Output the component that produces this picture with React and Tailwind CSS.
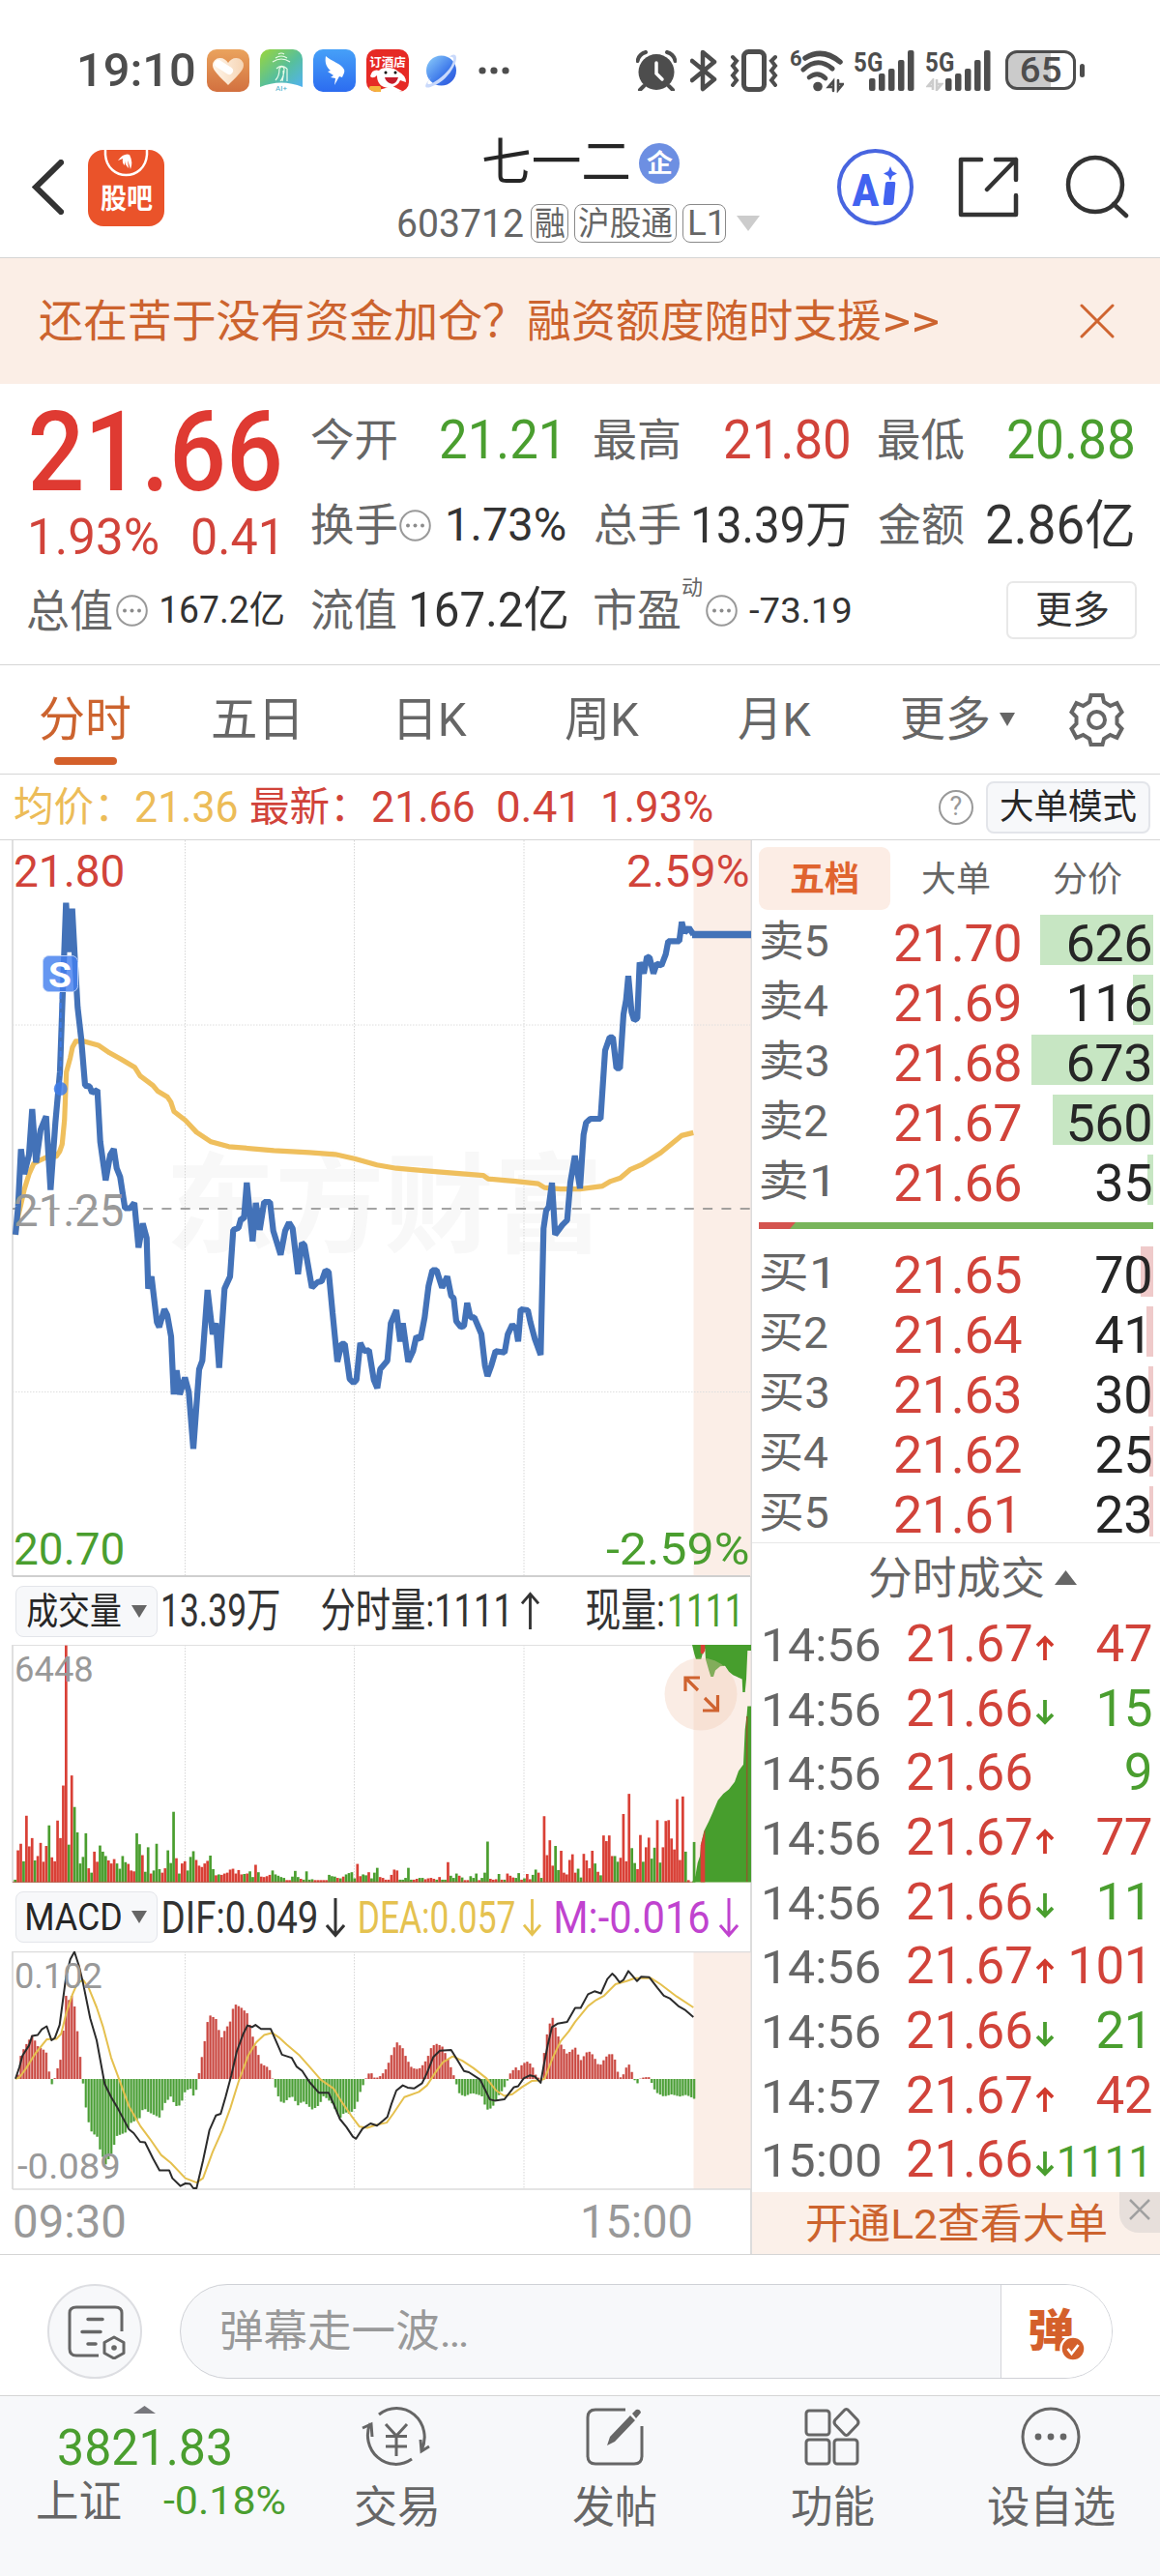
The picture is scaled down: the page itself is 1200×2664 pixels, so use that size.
import { useLayoutEffect, useRef } from "react";

/* Text whose inked extent fills the width given by its class. */
function Fit({ children, className = "" }) {
  const outer = useRef(null);
  const inner = useRef(null);
  useLayoutEffect(() => {
    const el = inner.current;
    const cs = getComputedStyle(el);
    const ctx = document.createElement("canvas").getContext("2d");
    ctx.font = `${cs.fontWeight} ${cs.fontSize} ${cs.fontFamily}`;
    const m = ctx.measureText(el.textContent);
    const ink = m.actualBoundingBoxRight + m.actualBoundingBoxLeft;
    const k = outer.current.clientWidth / ink;
    el.style.transform = `translateX(${m.actualBoundingBoxLeft * k}px) scaleX(${k})`;
  }, [children]);
  return (
    <span ref={outer} className={`block shrink-0 leading-none ${className}`}>
      <span ref={inner} className="inline-block origin-left whitespace-nowrap leading-none">{children}</span>
    </span>
  );
}

const RED = "#d94036";
const GREEN = "#4a9e2f";

/* ---------- status bar ---------- */
function SignalBars({ className }) {
  return (
    <svg className={className} viewBox="0 0 47 42" fill="#4d4d4d">
      <rect x="0" y="29" width="6.5" height="13" rx="2" />
      <rect x="10" y="24" width="6.5" height="18" rx="2" />
      <rect x="20" y="19" width="6.5" height="23" rx="2" />
      <rect x="30" y="10" width="6.5" height="32" rx="2" />
      <rect x="40" y="0" width="6.5" height="42" rx="2" />
    </svg>
  );
}

function StatusBar() {
  return (
    <div className="flex h-[130px] items-center pl-[83px] pt-[15px] text-[#4d4d4d]">
      <Fit className="w-[118px] text-[49px] font-medium">19:10</Fit>
      <svg className="ml-[13px] h-[44px] w-[44px]" viewBox="0 0 44 44">
        <defs>
          <linearGradient id="heartBg" x1="0" y1="0" x2="0" y2="1"><stop offset="0" stopColor="#eaa35d" /><stop offset="1" stopColor="#d2703f" /></linearGradient>
          <linearGradient id="heartFg" x1="0" y1="0" x2="1" y2="0"><stop offset="0" stopColor="#fff6ea" /><stop offset="1" stopColor="#f6d5b5" /></linearGradient>
        </defs>
        <rect width="44" height="44" rx="10" fill="url(#heartBg)" />
        <path d="M22 37C14 29 6 22 6 16.500a7.500 7.500 0 0 1 7.500-7.500c4 0 6.500 2 8.500 5 2-3 4.500-5 8.500-5a7.500 7.500 0 0 1 7.500 7.500C38 22 30 29 22 37Z" fill="url(#heartFg)" />
        <path d="M12 15l11 7" stroke="#fff" strokeWidth="8" strokeLinecap="round" />
      </svg>
      <svg className="ml-[11px] h-[44px] w-[44px]" viewBox="0 0 44 44">
        <defs><linearGradient id="aiBg" x1="0" y1="0" x2="1" y2="1"><stop offset="0" stopColor="#9bd63a" /><stop offset=".55" stopColor="#57bf9c" /><stop offset="1" stopColor="#51b2f2" /></linearGradient></defs>
        <path d="M10 0h24a10 10 0 0 1 10 10v29Q22 30 0 39V10A10 10 0 0 1 10 0Z" fill="url(#aiBg)" />
        <g fill="none" stroke="#e8fbe8" strokeWidth="1.200">
          <path d="M19 5q3-2 6 0M16 9q6-4 12 0M13 13q9-6 18 0M16 32q4-4 4-12q3-4 5 0q0 8-4 13M24 22q1 5-1 11M28 20v13M17 20q5-5 11 0" />
        </g>
        <text x="22" y="43" textAnchor="middle" fontSize="8" fontFamily="Roboto" fill="#46aecb">AI+</text>
      </svg>
      <svg className="ml-[11px] h-[44px] w-[44px]" viewBox="0 0 44 44">
        <defs><linearGradient id="wingBg" x1="0" y1="0" x2="0" y2="1"><stop offset="0" stopColor="#46a0f8" /><stop offset="1" stopColor="#2c6cf0" /></linearGradient></defs>
        <rect width="44" height="44" rx="10" fill="url(#wingBg)" />
        <path d="M13 7c5 5 17 8 19 14 1 3-1 5-2 8l-3-1-5 9 1-7-5-1 3-2-6-4 3-1c-5-4-6-9-5-15Z" fill="#fff" />
      </svg>
      <svg className="ml-[11px] h-[44px] w-[44px]" viewBox="0 0 44 44">
        <defs><clipPath id="dogClip"><rect width="44" height="44" rx="10" /></clipPath></defs>
        <g clipPath="url(#dogClip)">
          <rect width="44" height="44" fill="#e62a25" />
          <text x="22" y="18" textAnchor="middle" fontSize="12.500" fontWeight="700" fontFamily="'Noto Sans CJK SC'" fill="#fff">订酒店</text>
          <path d="M4 28q2-8 9-6 2-3 9-3t11 4q8 4 8 11l-6-2q-2 6-12 8Q11 39 11 27q-4 4-7 1Z" fill="#fff" />
          <circle cx="20" cy="24" r="1.500" /><circle cx="30" cy="24" r="1.500" />
          <path d="M19 29h14q-3 9-9 6-4-2-5-6Z" fill="#c41c2b" />
          <path d="M13 42l14-4 10 5v3H13Z" fill="#fff" />
          <rect x="3" y="38" width="12" height="7" rx="1.500" fill="#f4b23c" />
        </g>
      </svg>
      <svg className="ml-[15px] h-[38px] w-[37px]" viewBox="0 0 37 38">
        <defs><linearGradient id="globe" x1="0" y1="0" x2="1" y2="1"><stop offset="0" stopColor="#8fd0fb" /><stop offset=".6" stopColor="#3c77ea" /><stop offset="1" stopColor="#2f55da" /></linearGradient></defs>
        <circle cx="18.500" cy="19" r="15.500" fill="url(#globe)" />
        <path d="M8 26C-2 37 2 39 12 34C24 29 34 14 34 6C34 0 28 3 27 5C33 3 32 10 27 17C21 25 8 34 5 33C3 32 6 29 8 26Z" fill="#c9d9fb" />
      </svg>
      <svg className="ml-[20px] h-[8px] w-[32px]" viewBox="0 0 32 8" fill="#4d4d4d"><circle cx="4" cy="4" r="3.600" /><circle cx="16" cy="4" r="3.600" /><circle cx="28" cy="4" r="3.600" /></svg>

      <svg className="ml-[131px] h-[42px] w-[42px]" viewBox="0 0 42 42">
        <circle cx="21" cy="22.500" r="18.500" fill="#4d4d4d" />
        <path d="M1.500 11Q3 4 10 2M40.500 11Q39 4 32 2M8 37l-4 4M34 37l4 4" stroke="#4d4d4d" strokeWidth="4" strokeLinecap="round" fill="none" />
        <path d="M21 13v11l6 6" stroke="#fff" strokeWidth="3.500" strokeLinecap="round" fill="none" />
      </svg>
      <svg className="ml-[14px] h-[44px] w-[28px]" viewBox="0 0 28 44" fill="none" stroke="#4d4d4d" strokeWidth="4.500" strokeLinecap="round" strokeLinejoin="round"><path d="M2 12l23 19-12 10V3l12 10L2 32" /></svg>
      <svg className="ml-[13px] h-[44px] w-[50px]" viewBox="0 0 50 44" fill="none" stroke="#4d4d4d" strokeLinecap="round">
        <rect x="14.500" y="2.500" width="21" height="39" rx="5" strokeWidth="5" />
        <path d="M3 8l4 4-4 5 4 5-4 5 4 5-4 5M47 8l-4 4 4 5-4 5 4 5-4 5 4 5" strokeWidth="4" />
      </svg>
      <div className="ml-[12px] flex h-[46px] w-[56px] items-start">
        <span className="w-[11px] text-[22px] font-bold leading-none">6</span>
        <svg className="mt-[2px] h-[44px] w-[45px]" viewBox="0 0 45 44" fill="none" stroke="#4d4d4d" strokeLinecap="round">
          <path d="M5 8Q23-3 41 12" strokeWidth="5.500" /><path d="M3 20Q18 6 33 19" strokeWidth="5" /><path d="M9 28q9-7 17 1" strokeWidth="4.600" />
          <circle cx="18" cy="37.500" r="4.800" fill="#4d4d4d" stroke="none" />
          <path d="M34 42V32l-5 6h5M39 31v10l5-6h-5" strokeWidth="2.600" />
        </svg>
      </div>
      <div className="relative ml-[11px] h-[42px] w-[62px]">
        <SignalBars className="absolute bottom-0 right-0 h-[42px] w-[47px]" />
        <Fit className="absolute left-0 top-0 w-[28px] text-[27px] font-bold">5G</Fit>
      </div>
      <div className="relative ml-[12px] h-[42px] w-[67px]">
        <SignalBars className="absolute bottom-0 right-0 h-[42px] w-[47px]" />
        <Fit className="absolute left-0 top-0 w-[28px] text-[27px] font-bold">5G</Fit>
        <svg className="absolute bottom-0 left-0 h-[13px] w-[18px]" viewBox="0 0 18 13" stroke="#ccc" strokeWidth="2.600" fill="none"><path d="M7 12V2L2 8h5M11 1v11l5-6h-5" /></svg>
      </div>
      <div className="ml-[15px] flex items-center">
        <div className="flex h-[41px] w-[73px] items-center justify-center rounded-[12px] border-[3px] border-[#4d4d4d] bg-gradient-to-r from-[#cbcbcb] from-65% to-white to-65%">
          <Fit className="w-[40px] text-[36px] font-medium">65</Fit>
        </div>
        <div className="ml-[4px] h-[14px] w-[5px] rounded-[3px] bg-[#4d4d4d]" />
      </div>
    </div>
  );
}

/* ---------- header ---------- */
function Header() {
  return (
    <div className="flex h-[137px] items-start border-b border-[#d5d5d5] pl-[33px]">
      <svg className="mt-[35px] h-[57px] w-[33px]" viewBox="0 0 33 57" fill="none" stroke="#333" strokeWidth="6"><path d="M30 3L4 28.500 30 54" strokeLinecap="square" /></svg>
      <div className="relative ml-[25px] mt-[25px] h-[79px] w-[79px] overflow-hidden rounded-[16px] bg-[#ea532a]">
        <svg className="absolute left-0 top-0 h-[79px] w-[79px]" viewBox="0 0 79 79" fill="none">
          <path d="M18 0v5c2 28 41 28 43 0V0" stroke="#fff" strokeWidth="2.500" />
          <path d="M31 11q6-8 12-6 4 8 1 15-2-7-3-9l1 8q-4-4-4-8l0 5q-3-2-2-7Z" fill="#fff" />
        </svg>
        <Fit className="absolute left-[13px] top-[37px] w-[54px] text-[29px] font-bold text-white">股吧</Fit>
      </div>
      <div className="ml-[242px] w-[374px]">
        <div className="flex h-[76px] items-center pl-[88px] pt-[2px]">
          <Fit className="w-[151px] text-[52px] text-[#262626]">七一二</Fit>
          <div className="ml-[10px] flex h-[42px] w-[42px] items-center justify-center rounded-full bg-[#6d8fe2]">
            <Fit className="w-[27px] text-[26px] font-bold text-white">企</Fit>
          </div>
        </div>
        <div className="flex h-[50px] items-center text-[#666]">
          <Fit className="w-[129px] text-[41px]">603712</Fit>
          <div className="ml-[8px] flex h-[40px] w-[39px] items-center justify-center rounded-[8px] border border-[#8a8a8a]"><Fit className="w-[30px] text-[34px]">融</Fit></div>
          <div className="ml-[6px] flex h-[40px] w-[106px] items-center justify-center rounded-[8px] border border-[#8a8a8a]"><Fit className="w-[96px] text-[34px]">沪股通</Fit></div>
          <div className="ml-[6px] flex h-[40px] w-[45px] items-center justify-center rounded-[8px] border border-[#8a8a8a]"><Fit className="w-[31px] text-[36px]">L1</Fit></div>
          <svg className="ml-[11px] h-[16px] w-[24px]" viewBox="0 0 24 16"><path d="M0 0h24L12 16Z" fill="#ccc" /></svg>
        </div>
      </div>
      <div className="relative ml-[80px] mt-[24px] h-[79px] w-[79px] rounded-full border-4 border-[#4865e0]">
        <Fit className="absolute left-[11px] top-[15px] w-[29px] text-[47px] font-black text-[#4263f0]">A</Fit>
        <svg className="absolute left-[42px] top-[13px] h-[42px] w-[16px]" viewBox="0 0 16 42" fill="#4263f0"><path d="M9 1l2 5 5 2.500-5 2.500-2 5-2-5-5-2.500 5-2.500ZM4 18.500q.200-1.500 2-1.500h7q1.500 0 1.300 1.500L12.500 39q-.300 2-2 2H3q-1.500 0-1.300-2Z" /></svg>
      </div>
      <svg className="ml-[46px] mt-[32px] h-[64px] w-[64px]" viewBox="0 0 64 64" fill="none" stroke="#333" strokeWidth="4.500" strokeLinecap="round" strokeLinejoin="round">
        <path d="M24 3H3v57h57V40M39 3h21v21M60 3L30 34" />
      </svg>
      <svg className="ml-[47px] mt-[30px] h-[66px] w-[66px]" viewBox="0 0 66 66" fill="none" stroke="#333" strokeWidth="4.500" strokeLinecap="round"><circle cx="31" cy="31" r="28" /><path d="M50 51l13 12" /></svg>
    </div>
  );
}

function Banner() {
  return (
    <div className="flex h-[130px] items-center bg-[#fbeee6] pl-[41px] text-[46px] text-[#cc632e]">
      <Fit className="w-[480px]">还在苦于没有资金加仓？</Fit>
      <Fit className="ml-[26px] w-[364px]">融资额度随时支援</Fit>
      <Fit className="ml-[5px] w-[55px]">&gt;&gt;</Fit>
      <svg className="ml-[146px] h-[36px] w-[36px]" viewBox="0 0 36 36" stroke="#cf6430" strokeWidth="3" strokeLinecap="round"><path d="M2 2l32 32M34 2L2 34" /></svg>
    </div>
  );
}

/* ---------- quote ---------- */
function Dots() {
  return (
    <svg className="h-[33px] w-[33px] shrink-0" viewBox="0 0 33 33" fill="#8c8c8c">
      <circle cx="16.500" cy="16.500" r="15.300" fill="none" stroke="#999" strokeWidth="2" />
      <circle cx="9" cy="16.500" r="2" /><circle cx="16.500" cy="16.500" r="2" /><circle cx="24" cy="16.500" r="2" />
    </svg>
  );
}
const Label = ({ children }) => <Fit className="w-[88px] text-[46px] text-[#666]">{children}</Fit>;

function Quote() {
  return (
    <div className="flex h-[291px] border-b border-[#d5d5d5] pt-[14px] text-[#333]">
      <div className="w-[322px]">
        <div className="flex h-[112px] items-center pl-[32px]"><Fit className="w-[257px] text-[115px] font-medium text-[#df3a32]">21.66</Fit></div>
        <div className="flex h-[65px] items-center pl-[32px] text-[#d1433a]">
          <Fit className="w-[131px] text-[52px]">1.93%</Fit>
          <Fit className="ml-[36px] w-[86px] text-[52px]">0.41</Fit>
        </div>
        <div className="flex h-[87px] items-center pl-[28px]">
          <Label>总值</Label><span className="ml-[4px]"><Dots /></span>
          <Fit className="ml-[14px] w-[126px] text-[39px]">167.2亿</Fit>
        </div>
      </div>
      <div className="w-[264px]">
        <div className="flex h-[88px] items-center justify-between pr-[10px]"><Label>今开</Label><Fit className="w-[120px] text-[55px] text-[#4a9e2f]">21.21</Fit></div>
        <div className="flex h-[88px] items-center"><Label>换手</Label><span className="ml-[3px]"><Dots /></span><Fit className="ml-[18px] w-[121px] text-[48px]">1.73%</Fit></div>
        <div className="flex h-[88px] items-center justify-between"><Label>流值</Label><Fit className="w-[160px] text-[50px]">167.2亿</Fit></div>
      </div>
      <div className="ml-[29px] w-[266px]">
        <div className="flex h-[88px] items-center justify-between pr-[3px]"><Label>最高</Label><Fit className="w-[128px] text-[55px] text-[#d1433a]">21.80</Fit></div>
        <div className="flex h-[88px] items-center justify-between pr-[3px]"><Label>总手</Label><Fit className="w-[160px] text-[51px]">13.39万</Fit></div>
        <div className="flex h-[88px] items-center">
          <Label>市盈</Label>
          <Fit className="mb-[46px] ml-[3px] w-[20px] text-[22px] text-[#666]">动</Fit>
          <span className="ml-[4px]"><Dots /></span>
          <Fit className="ml-[12px] w-[105px] text-[37px]">-73.19</Fit>
        </div>
      </div>
      <div className="ml-[28px] w-[267px]">
        <div className="flex h-[88px] items-center justify-between pr-[4px]"><Label>最低</Label><Fit className="w-[129px] text-[55px] text-[#4a9e2f]">20.88</Fit></div>
        <div className="flex h-[88px] items-center justify-between pr-[4px]"><Label>金额</Label><Fit className="w-[151px] text-[55px]">2.86亿</Fit></div>
        <div className="flex h-[88px] items-center justify-end">
          <div className="flex h-[60px] w-[135px] items-center justify-center rounded-[7px] border-2 border-[#e8e8e8]"><Fit className="w-[74px] text-[39px]">更多</Fit></div>
        </div>
      </div>
    </div>
  );
}

function Tabs() {
  return (
    <div className="flex h-[113px] items-center border-b border-[#d5d5d5] pl-[42px] text-[49px] text-[#666]">
      <div className="relative">
        <Fit className="w-[93px] text-[#cc632e]">分时</Fit>
        <div className="absolute left-[14px] top-[63px] h-[8px] w-[65px] rounded-full bg-[#d4602b]" />
      </div>
      <Fit className="ml-[85px] w-[87px]">五日</Fit>
      <Fit className="ml-[106px] w-[70px]">日K</Fit>
      <Fit className="ml-[102px] w-[76px]">周K</Fit>
      <Fit className="ml-[103px] w-[75px]">月K</Fit>
      <Fit className="ml-[94px] w-[90px]">更多</Fit>
      <svg className="ml-[11px] h-[14px] w-[16px]" viewBox="0 0 16 14"><path d="M0 0h16L8 14Z" fill="#666" /></svg>
      <svg className="ml-[56px] h-[57px] w-[57px]" viewBox="0 0 57 57" fill="none" stroke="#666" strokeWidth="4">
        <path d="M22.500 3h12l1.500 7 6.500 4 7-3 5 9.500-5 5v7l5 5-5 9.500-7-3-6.500 4-1.500 6h-12l-1.500-6-6.500-4-7 3-5-9.500 5-5v-7l-5-5 5-9.500 7 3 6.500-4Z" />
        <circle cx="28.500" cy="28.500" r="8.500" />
      </svg>
    </div>
  );
}

function InfoRow() {
  return (
    <div className="flex h-[68px] items-center border-b border-[#d5d5d5] pl-[15px] text-[44px] text-[#d1433a]">
      <Fit className="w-[96px] text-[42px] text-[#ecbc58]">均价：</Fit>
      <Fit className="ml-[30px] w-[104px] text-[#ecbc58]">21.36</Fit>
      <Fit className="ml-[14px] w-[96px] text-[42px]">最新：</Fit>
      <Fit className="ml-[31px] w-[104px]">21.66</Fit>
      <Fit className="ml-[25px] w-[78px]">0.41</Fit>
      <Fit className="ml-[31px] w-[113px]">1.93%</Fit>
      <div className="ml-[234px] flex h-[36px] w-[36px] items-center justify-center rounded-full border-2 border-[#999] text-[27px] leading-none text-[#999]">?</div>
      <div className="ml-[13px] flex h-[54px] w-[170px] items-center justify-center rounded-[8px] border-2 border-[#e3e5ea] bg-[#f7f8fa]"><Fit className="w-[140px] text-[36px] text-[#262626]">大单模式</Fit></div>
    </div>
  );
}

/* ---------- chart data: x in thirds of a pixel ---------- */
const PRICE = "48,838 56,780 65,660 75,712 90,672 100,577 112,688 126,620 143,592 157,745 172,605 186,500 195,330 205,148 214,250 224,160 232,258 241,365 252,430 264,528 278,530 286,543 302,537 311,645 328,725 342,672 353,660 362,700 373,718 388,783 404,783 417,772 430,865 443,815 455,845 460,950 470,925 487,1020 494,1030 510,993 519,1005 531,1050 539,1170 548,1120 558,1170 574,1135 586,1165 600,1283 618,1118 628,1100 644,953 660,1045 670,1022 680,1115 697,950 714,925 724,828 740,824 748,805 757,805 766,730 784,852 794,772 806,828 820,770 838,770 848,830 871,880 885,830 897,813 908,825 925,920 937,855 945,860 968,948 985,937 998,935 1010,912 1020,915 1032,1000 1047,1102 1060,1065 1070,1065 1085,1138 1097,1146 1106,1140 1118,1063 1130,1080 1145,1078 1160,1140 1171,1157 1180,1118 1202,1100 1213,1022 1230,995 1242,1060 1250,1022 1267,1102 1282,1080 1292,1050 1305,1055 1318,1010 1330,945 1342,912 1355,912 1372,948 1388,925 1400,965 1408,970 1416,1018 1430,1030 1440,1028 1450,980 1460,1010 1472,1010 1494,1045 1505,1110 1513,1132 1525,1110 1538,1080 1566,1083 1576,1045 1590,1025 1602,1035 1608,1060 1616,993 1638,995 1646,1020 1660,1055 1678,1088 1687,825 1695,788 1703,780 1713,730 1723,838 1745,818 1760,808 1770,730 1784,674 1800,742 1811,630 1819,605 1832,597 1864,597 1878,455 1892,428 1902,428 1913,492 1924,492 1935,380 1943,350 1950,300 1960,375 1968,392 1978,388 1985,272 1998,295 2008,260 2016,262 2028,295 2038,275 2053,278 2066,255 2074,228 2108,228 2116,188 2125,210 2138,200 2152,214";
const AVERAGE = "48,838 56,800 65,775 75,745 90,712 105,690 125,683 150,675 175,675 185,665 193,650 200,600 206,500 218,470 225,448 235,436 262,436 305,444 340,460 375,473 418,490 435,508 475,528 490,540 520,552 530,562 540,582 575,600 610,625 655,645 710,655 850,663 960,667 1040,671 1100,680 1170,693 1230,700 1350,707 1500,715 1515,722 1600,727 1670,732 1690,740 1740,743 1800,743 1870,737 1895,727 1925,720 1955,703 1990,693 2050,668 2115,632 2152,626";
const DIF = "48,1148 60,1122 70,1095 90,1072 100,1050 117,1048 130,1035 145,1028 160,1060 170,1055 185,1025 195,970 205,915 218,875 231,858 245,890 258,930 280,1010 300,1060 325,1160 345,1190 365,1215 400,1263 415,1272 435,1292 450,1293 475,1330 495,1357 525,1357 535,1375 560,1393 575,1387 590,1388 600,1398 610,1398 630,1335 650,1265 670,1232 685,1228 700,1190 718,1140 735,1085 755,1045 768,1026 782,1030 793,1025 810,1034 840,1034 875,1093 905,1100 920,1120 938,1130 960,1155 990,1180 1020,1180 1035,1205 1055,1240 1075,1258 1095,1280 1105,1285 1125,1262 1150,1250 1170,1255 1190,1243 1202,1235 1215,1205 1230,1175 1250,1163 1265,1168 1285,1170 1310,1158 1325,1135 1345,1098 1365,1084 1400,1082 1415,1100 1440,1130 1455,1133 1490,1150 1505,1172 1520,1195 1535,1198 1565,1195 1595,1167 1608,1165 1625,1147 1645,1140 1660,1143 1678,1157 1687,1120 1700,1070 1713,1030 1730,1022 1760,1018 1785,986 1802,986 1825,955 1845,948 1865,953 1885,920 1900,908 1910,915 1923,928 1935,922 1950,902 1962,912 1977,925 1990,915 2015,916 2040,940 2060,958 2080,965 2105,982 2125,990 2152,1007";
const DEA = "48,1148 60,1145 80,1125 110,1090 145,1058 175,1057 190,1045 205,1000 225,955 240,930 258,922 275,940 300,985 320,1030 345,1100 370,1150 400,1210 435,1255 465,1285 500,1322 530,1340 575,1375 610,1385 630,1375 660,1315 690,1265 715,1215 740,1155 770,1095 795,1065 820,1048 845,1043 865,1053 890,1070 930,1095 960,1120 995,1150 1035,1170 1060,1200 1090,1232 1115,1257 1140,1260 1165,1254 1200,1248 1220,1228 1255,1190 1300,1178 1325,1163 1350,1135 1375,1110 1405,1097 1435,1107 1470,1124 1510,1147 1540,1175 1565,1187 1590,1183 1620,1167 1650,1153 1675,1152 1690,1148 1715,1100 1740,1062 1765,1040 1785,1018 1825,982 1850,968 1875,958 1910,932 1945,925 1970,918 2020,918 2050,932 2100,960 2152,985";
const HIST = "48,0 56,10 65,55 78,75 100,100 117,75 143,63 152,18 161,-12 170,2 179,25 188,45 200,140 205,190 214,180 223,190 231,168 240,110 249,50 258,-12 267,-68 275,-98 285,-122 302,-132 310,-160 328,-195 345,-172 363,-130 390,-122 407,-100 433,-90 445,-65 460,-75 495,-88 512,-55 530,-40 545,-62 560,-60 574,-30 590,-20 600,-38 612,-20 618,15 635,85 644,130 653,145 670,138 686,92 697,110 714,130 723,160 732,170 750,162 767,150 785,95 800,60 810,35 835,25 845,3 853,-15 868,-50 880,-55 905,-38 925,-60 940,-50 970,-70 990,-60 1005,-38 1030,-55 1055,-90 1070,-75 1085,-80 1105,-65 1115,-35 1128,-12 1135,0 1142,12 1155,13 1162,3 1175,3 1190,14 1200,25 1215,55 1230,85 1250,70 1260,50 1275,28 1290,22 1305,25 1325,45 1340,75 1355,80 1372,75 1390,45 1405,15 1415,-8 1425,-32 1440,-40 1465,-32 1495,-38 1502,-55 1515,-72 1530,-62 1545,-40 1565,-20 1575,-3 1583,12 1600,27 1610,20 1620,33 1635,40 1650,33 1665,5 1680,0 1687,50 1697,100 1713,145 1723,120 1740,80 1760,57 1785,72 1802,42 1825,65 1840,55 1860,28 1880,50 1897,60 1910,42 1920,6 1930,2 1940,20 1950,37 1960,18 1970,-3 1977,-12 1985,0 2000,4 2015,4 2022,-8 2035,-30 2060,-40 2085,-35 2110,-40 2130,-36 2154,-45";
const VOLUME = "6g 73r 88r 48g 152r 82r 101r 50g 60r 90r 47r 83r 130g 57r 48r 141r 101r 221r 541r 86g 244r 172g 114g 43g 58g 112g 32r 22g 70r 47r 84g 70g 60g 50r 43r 53r 43g 31g 60g 46g 42r 27r 25r 112g 87g 62r 24g 80g 20r 27g 88g 30g 22r 32r 73g 44g 161g 55r 20g 43r 48r 27g 58g 71g 51r 38r 35r 43r 49r 61g 30g 16r 18g 17r 20r 22r 29r 31r 20r 28r 18r 19g 20r 25g 12g 40r 23g 13r 12r 14r 17r 27g 18g 15g 12g 10g 5r 5r 13g 26g 12g 8r 6g 25g 6g 7g 5r 5r 5r 5r 5r 17g 14g 13g 10r 9g 13r 18g 21g 23g 9g 42r 14r 18g 16g 23r 9g 22g 33g 12r 10r 6r 6r 17r 29r 27r 6g 6g 10g 33g 6g 6r 8r 10g 10g 7r 9r 10r 8r 6g 12r 6g 6g 46r 15g 10g 20g 15r 11g 5r 5r 14g 10g 20g 5r 10g 22g 93g 8r 6r 7r 19g 6r 6g 20r 15r 11r 10g 21g 6r 9g 19r 7r 17g 29g 22r 10g 151r 62r 96r 38r 83g 28g 72r 22r 18r 51r 64r 22r 31g 11g 65r 50r 32r 72r 43g 24r 16g 107r 94r 107r 60r 60g 47g 56r 156r 48r 202r 78g 44g 30r 108r 47g 80r 102r 54g 79g 142r 45g 80r 140r 142r 100r 75r 190r 51r 196r 70g 5r 0r 92g";

const pts = (s) => s.split(" ").map((p) => p.split(",").map(Number));
const toPoints = (s, top, unit) => pts(s).map(([x, y]) => `${(x / 3).toFixed(1)},${(top + y / unit).toFixed(1)}`).join(" ");
const U = 2.0103;
const V = 2.2085;

const histKeys = pts(HIST);
const histAt = (x) => {
  const i = histKeys.findIndex((k) => k[0] >= x);
  if (i <= 0) return i === 0 ? histKeys[0][1] : histKeys[histKeys.length - 1][1];
  const [x0, y0] = histKeys[i - 1];
  const [x1, y1] = histKeys[i];
  return y0 + ((y1 - y0) * (x - x0)) / (x1 - x0);
};

function Grid({ top, bottom }) {
  return (
    <>
      <rect x="717.500" y={top} width="59" height={bottom - top} fill="#fbeee7" />
      {[191.5, 366.5, 542].map((x) => <path key={x} d={`M${x} ${top}V${bottom}`} stroke="#d6d6d6" strokeWidth="1" strokeDasharray="1.500 1.500" />)}
      <path d={`M13 ${top}V${bottom}`} stroke="#e0e0e0" strokeWidth="2" />
    </>
  );
}

function PriceChart() {
  return (
    <div className="relative h-[762px] text-[47px] leading-none">
      <div className="absolute left-[177px] top-[324px]"><Fit className="w-[440px] text-[112px] font-bold text-[#f8f8f8]">东方财富</Fit></div>
      <svg className="absolute inset-0 h-[762px] w-[777px]" viewBox="0 869 777 762" fill="none">
        <Grid top={869} bottom={1630} />
        <path d="M13 1060H776M13 1439.500H776" stroke="#dedede" strokeDasharray="1.500 1.500" />
        <path d="M13 1250H776" stroke="#858585" strokeWidth="1.700" strokeDasharray="10 9.300" />
        <path d="M13 1630H776" stroke="#cfcfcf" strokeWidth="2" />
        <polyline points={toPoints(AVERAGE, 860, U)} stroke="#efbf5d" strokeWidth="5.200" strokeLinejoin="round" />
        <polyline points={toPoints(PRICE, 860, U)} stroke="#4372b8" strokeWidth="6.200" strokeLinejoin="bevel" />
        <path d="M716 966.500H777" stroke="#4372b8" strokeWidth="7.500" />
        <ellipse cx="62.700" cy="1126" rx="7" ry="7" fill="#3f7ce8" opacity=".85" />
        <path d="M62.700 1027V1120" stroke="#3f7ce8" strokeWidth="2" strokeDasharray="6 4" />
        <rect x="44.500" y="988.500" width="36" height="37" rx="6" fill="#437fee" fillOpacity=".82" stroke="#b8cff8" />
      </svg>
      <div className="absolute left-[51px] top-[121px]"><Fit className="w-[22px] text-[37px] font-bold text-white">S</Fit></div>
      <Fit className="absolute left-[16px] top-[8px] w-[111px] text-[#d1433a]">21.80</Fit>
      <Fit className="absolute left-[650px] top-[8px] w-[124px] text-[#d1433a]">2.59%</Fit>
      <Fit className="absolute left-[16px] top-[359px] w-[111px] text-[#999]">21.25</Fit>
      <Fit className="absolute left-[16px] top-[709px] w-[111px] text-[#4a9e2f]">20.70</Fit>
      <Fit className="absolute left-[627px] top-[709px] w-[147px] text-[#4a9e2f]">-2.59%</Fit>
    </div>
  );
}

function Arrow({ up, className }) {
  return (
    <svg className={className} viewBox="0 0 20 42" fill="none" stroke="currentColor" strokeWidth="3">
      <path d={up ? "M10 41V2M1 13L10 2.500 19 13" : "M10 1V40M1 29L10 39.500 19 29"} />
    </svg>
  );
}

function Picker({ children }) {
  return (
    <div className="ml-[16px] flex h-[53px] w-[147px] shrink-0 items-center rounded-[8px] border border-[#e3e5ea] bg-[#f7f8fa] pl-[11px] text-[#262626]">
      <Fit className="w-[97px] text-[38px]">{children}</Fit>
      <svg className="ml-[11px] h-[13px] w-[16px]" viewBox="0 0 16 13"><path d="M0 0h16L8 13Z" fill="#666" /></svg>
    </div>
  );
}

function VolumeChart() {
  return (
    <div className="relative h-[246px]">
      <svg className="absolute inset-0 h-[246px] w-[777px]" viewBox="0 1701 777 246">
        <Grid top={1701} bottom={1947} />
        <path d="M13 1701.500H777" stroke="#e0e0e0" />
        {VOLUME.split(" ").map((v, i) => {
          const h = parseInt(v, 10) / V;
          return <rect key={i} x={(47 + 8.78 * i) / 3 - 1.35} y={1946.6 - h} width="2.700" height={h} fill={v.endsWith("r") ? RED : GREEN} />;
        })}
        <path d="M13 1946.300H717" stroke="#a7523c" strokeWidth=".8" />
        <polygon points={toPoints("2148,699 2158,685 2165,655 2172,640 2176,610 2185,582 2200,560 2212,540 2228,512 2245,497 2262,487 2280,470 2292,445 2307,430 2312,350 2318,315 2320,297 2332,297 2332,699", 1630, V)} fill="#479e2d" />
        <polygon points={toPoints("2174,699 2174,615 2188,578 2188,699", 1630, V)} fill={RED} />
        <path d="M772.700 1775V1946" stroke="#8a5f2c" strokeWidth="1.500" />
        <polygon points={toPoints("2148,157 2155,178 2160,190 2176,190 2180,178 2188,165 2190,190 2200,215 2206,230 2214,230 2220,215 2235,206 2250,205 2262,218 2275,226 2303,235 2305,265 2312,265 2316,235 2320,170 2332,170 2332,157", 1630, V)} fill="#479e2d" />
        <polygon points={toPoints("2174,157 2174,176 2182,178 2188,170 2188,157", 1630, V)} fill={RED} />
        <circle cx="725" cy="1752" r="37.500" fill="#f0c9b3" fillOpacity=".35" />
        <path d="M709 1749V1735H724M709 1735L722 1748M729 1756L742 1769M727 1769H742.500V1753" fill="none" stroke="#cf6330" strokeWidth="3.200" />
      </svg>
      <Fit className="absolute left-[17px] top-[7px] w-[78px] text-[37px] text-[#999]">6448</Fit>
    </div>
  );
}

function MacdChart() {
  return (
    <div className="relative h-[247px]">
      <svg className="absolute inset-0 h-[247px] w-[777px]" viewBox="0 2018 777 247" fill="none">
        <Grid top={2018} bottom={2264} />
        <path d="M13 2018.500H777M13 2264H777" stroke="#dcdcdc" strokeWidth="1.500" />
        {Array.from({ length: 241 }, (_, i) => {
          const x = 47 + 8.78 * i;
          const h = histAt(x) / V;
          return (
            <g key={i} fill={h > 0 ? "#c9463f" : "#4a9e35"}>
              <rect x={x / 3 - 1.45} y={h > 0 ? 2150 - h : 2150} width="2.920" height={Math.abs(h)} opacity=".5" />
              <rect x={x / 3 - 0.85} y={h > 0 ? 2150 - h : 2150} width="1.700" height={Math.abs(h)} />
            </g>
          );
        })}
        <polyline points={toPoints(DEA, 1630, V)} stroke="#e5c04e" strokeWidth="2" strokeLinejoin="round" />
        <polyline points={toPoints(DIF, 1630, V)} stroke="#2b2b2b" strokeWidth="2" strokeLinejoin="round" />
      </svg>
      <Fit className="absolute left-[17px] top-[7px] w-[88px] text-[37px] text-[#999]">0.102</Fit>
      <Fit className="absolute left-[18px] top-[204px] w-[105px] text-[37px] text-[#999]">-0.089</Fit>
    </div>
  );
}

/* ---------- order book ---------- */
const SELLS = [["卖5", "21.70", "626", "w-[117px]"], ["卖4", "21.69", "116", "w-[21px]"], ["卖3", "21.68", "673", "w-[126px]"], ["卖2", "21.67", "560", "w-[104px]"], ["卖1", "21.66", "35", "w-[6px]"]];
const BUYS = [["买1", "21.65", "70", "w-[13px]"], ["买2", "21.64", "41", "w-[7px]"], ["买3", "21.63", "30", "w-[5px]"], ["买4", "21.62", "25", "w-[4px]"], ["买5", "21.61", "23", "w-[4px]"]];
const TRADES = [["14:56", "21.67", 1, "47", 1], ["14:56", "21.66", -1, "15", 0], ["14:56", "21.66", 0, "9", 0], ["14:56", "21.67", 1, "77", 1], ["14:56", "21.66", -1, "11", 0], ["14:56", "21.67", 1, "101", 1], ["14:56", "21.66", -1, "21", 0], ["14:57", "21.67", 1, "42", 1], ["15:00", "21.66", -1, "1111", 0]];

function Level({ row, bar }) {
  const [name, price, qty, w] = row;
  return (
    <div className="relative flex h-[62px] items-center pl-[9px] pt-[8px] leading-none">
      <div className={`absolute right-[7px] top-[5px] h-[52px] ${bar} ${w}`} />
      <Fit className="relative w-[69px] pb-[4px] text-[44px] text-[#666]">{name}</Fit>
      <span className="relative ml-[68px] w-[136px] text-[54px] tracking-[-0.5px] text-[#d1433a]">{price}</span>
      <span className="relative flex-1 pr-[8px] text-right text-[54px] tracking-[-0.5px] text-[#262626]">{qty}</span>
    </div>
  );
}

function OrderBook() {
  return (
    <div className="w-[422px]">
      <div className="flex h-[72px] items-start pl-[7px] pt-[7px]">
        <div className="flex h-[65px] w-[136px] items-center justify-center rounded-[9px] bg-[#fcede5] pt-[3px]"><Fit className="w-[70px] text-[36px] font-bold text-[#e0642f]">五档</Fit></div>
        <div className="flex h-[65px] w-[136px] items-center justify-center pt-[3px]"><Fit className="w-[70px] text-[36px] text-[#666]">大单</Fit></div>
        <div className="flex h-[65px] w-[136px] items-center justify-center pt-[3px]"><Fit className="w-[70px] text-[36px] text-[#666]">分价</Fit></div>
      </div>
      {SELLS.map((r) => <Level key={r[0]} row={r} bar="bg-[#c7e6c3]" />)}
      <div className="flex h-[33px] items-start pl-[7px] pt-[13px]">
        <svg className="h-[7px] w-[408px]" viewBox="0 0 408 7"><path d="M0 0H408V7H0Z" fill="#78b55b" /><path d="M0 0H38L32 7H0Z" fill="#d4544f" /></svg>
      </div>
      {BUYS.map((r) => <Level key={r[0]} row={r} bar="bg-[#efcaca]" />)}
      <div className="mt-px flex h-[72px] items-center border-t border-[#e8e8e8] pl-[122px]">
        <Fit className="w-[180px] text-[46px] text-[#666]">分时成交</Fit>
        <svg className="ml-[11px] h-[15px] w-[23px]" viewBox="0 0 23 15"><path d="M0 15L11.500 0 23 15Z" fill="#666" /></svg>
      </div>
      {TRADES.map(([t, p, dir, q, up], i) => (
        <div key={i} className="flex h-[66.700px] items-center pl-[13px] leading-none">
          <Fit className="w-[119px] pt-[2px] text-[49px] text-[#666]">{t}</Fit>
          <Fit className="ml-[29px] w-[128px] text-[53px] text-[#d1433a]">{p}</Fit>
          <span className="ml-[5px] mt-[8px] w-[18px]">
            {dir !== 0 && (
              <svg className="h-[26px] w-[18px]" viewBox="0 0 18 26" fill="none" stroke={dir > 0 ? "#d1392c" : GREEN} strokeWidth="3.800">
                <path d={dir > 0 ? "M9 26V3M1 11L9 3 17 11" : "M9 0V23M1 15L9 23 17 15"} />
              </svg>
            )}
          </span>
          <span className={`-ml-[10px] flex-1 pr-[8px] text-right tracking-[-0.500px] ${q.length > 3 ? "pt-[4px] text-[45px]" : "text-[53px]"} ${up ? "text-[#d1433a]" : "text-[#4a9e2f]"}`}>{q}</span>
        </div>
      ))}
      <div className="relative flex h-[64px] items-center bg-[#fbf0e9] pl-[57px] pt-[3px]">
        <Fit className="w-[309px] text-[43px] text-[#cc632e]">开通L2查看大单</Fit>
        <div className="absolute right-0 top-0 flex h-[42px] w-[42px] items-center justify-center rounded-bl-[20px] bg-[#e7dfdb] pb-[6px]">
          <svg className="h-[22px] w-[22px]" viewBox="0 0 22 22" stroke="#a0a0a0" strokeWidth="2.500"><path d="M1 1l20 20M21 1L1 21" /></svg>
        </div>
      </div>
    </div>
  );
}

/* ---------- comment bar and navigation ---------- */
function CommentBar() {
  return (
    <div className="flex h-[147px] items-center border-y border-[#d5d5d5] pl-[49px] pt-[12px]">
      <div className="flex h-[98px] w-[98px] items-center justify-center rounded-full border-2 border-[#dddee2] bg-[#f7f8fa]">
        <svg className="ml-[4px] mt-[2px] h-[56px] w-[60px]" viewBox="0 0 60 56" fill="none" stroke="#666" strokeWidth="3.500" strokeLinejoin="round">
          <path d="M32 52H9q-7 0-7-7V8q0-6 7-6H49q7 0 7 6V27" strokeWidth="3" />
          <path d="M21 14.500H36M15 27.500H34M21 40H29" strokeLinecap="round" />
          <path d="M48 33l10 5.500v11l-10 5.500-10-5.500V38.500Z" strokeWidth="3" /><circle cx="48" cy="44" r="2.800" fill="#666" stroke="none" />
        </svg>
      </div>
      <div className="ml-[39px] flex h-[98px] w-[965px] overflow-hidden rounded-full border border-[#cfd1d6] bg-[#f7f8fa]">
        <div className="flex w-[848px] items-center pl-[42px] pt-[2px]"><Fit className="w-[254px] text-[45px] text-[#999]">弹幕走一波…</Fit></div>
        <div className="relative flex-1 border-l border-[#d3d4d9] bg-white">
          <Fit className="absolute left-[29px] top-[24px] w-[45px] text-[46px] font-black text-[#d4602b]">弹</Fit>
          <svg className="absolute left-[60px] top-[52px] h-[28px] w-[28px]" viewBox="0 0 28 28"><circle cx="14" cy="14" r="12.500" fill="#d4602b" stroke="#fff" strokeWidth="2.500" /><path d="M8.500 14l4 5 7-9" fill="none" stroke="#fff" strokeWidth="2.800" /></svg>
        </div>
      </div>
    </div>
  );
}

function NavItem({ label, width, children }) {
  return (
    <div className="flex flex-1 flex-col items-center pt-[9px]">
      <svg className="h-[66px] w-[74px]" viewBox="0 0 74 66" fill="none" stroke="#666" strokeWidth="3">{children}</svg>
      <Fit className={`mt-[18px] text-[45px] text-[#666] ${width}`}>{label}</Fit>
    </div>
  );
}

function BottomNav() {
  return (
    <div className="flex h-[186px] bg-[#f7f8fa]">
      <div className="w-[297px]">
        <svg className="ml-[138px] mt-[10px] h-[8px] w-[23px]" viewBox="0 0 23 8"><path d="M0 8L11.500 0 23 8Z" fill="#77777c" /></svg>
        <Fit className="ml-[61px] mt-[10px] w-[177px] text-[52px] text-[#4a9e2f]">3821.83</Fit>
        <div className="flex items-center pl-[39px] pt-[4px]">
          <Fit className="w-[86px] pt-[3px] text-[45px] text-[#666]">上证</Fit>
          <Fit className="ml-[44px] w-[126px] text-[41px] text-[#4a9e2f]">-0.18%</Fit>
        </div>
      </div>
      <NavItem label="交易" width="w-[84px]">
        <path d="M19 10A29 30 0 0 1 63 47M53 56A29 30 0 0 1 10 19M2 24l9-4 1 13M62 36l1 12 8-5" />
        <path d="M26 20l11 12 11-12M37 32V53M26 32.500H48M26 43H48" />
      </NavItem>
      <NavItem label="发帖" width="w-[86px]">
        <path d="M48 5H17q-8 0-8 8V53q0 8 8 8H57q8 0 8-8V22" />
        <path d="M29 42l3-9L53 11l5 5L37 38ZM55 9l4-4q4-1 5 3l-5 6Z" fill="#666" stroke="none" />
      </NavItem>
      <NavItem label="功能" width="w-[85px]">
        <rect x="10" y="6" width="24" height="25" rx="3" /><rect x="10" y="36" width="24" height="25" rx="3" /><rect x="39" y="36" width="24" height="25" rx="3" />
        <path d="M49 6q2.500-3 5 0l9 9.500q2 2.500 0 5l-9 9.500q-2.500 3-5 0l-9-9.500q-2-2.500 0-5Z" />
      </NavItem>
      <NavItem label="设自选" width="w-[131px]">
        <circle cx="37" cy="33" r="29" /><g fill="#666" stroke="none"><circle cx="24" cy="33" r="3.400" /><circle cx="37" cy="33" r="3.400" /><circle cx="50" cy="33" r="3.400" /></g>
      </NavItem>
    </div>
  );
}

export default function App() {
  return (
    <div className="h-[2664px] w-[1200px] overflow-hidden bg-white font-['Roboto','Noto_Sans_CJK_SC',sans-serif]">
      <StatusBar />
      <Header />
      <Banner />
      <Quote />
      <Tabs />
      <InfoRow />
      <div className="flex h-[1462px]">
        <div className="w-[778px] border-r-2 border-[#dcdcdc]">
          <PriceChart />
          <div className="flex h-[70px] items-center text-[48px] text-[#333]">
            <Picker>成交量</Picker>
            <Fit className="ml-[6px] w-[120px]">13.39万</Fit>
            <Fit className="ml-[44px] w-[191px]">分时量:1111</Fit>
            <Arrow up className="ml-[15px] h-[42px] w-[19px]" />
            <Fit className="ml-[49px] w-[79px]">现量:</Fit>
            <Fit className="ml-[7px] w-[70px] text-[#4a9e2f]">1111</Fit>
          </div>
          <VolumeChart />
          <div className="flex h-[71px] items-center text-[46px] text-[#333]">
            <Picker>MACD</Picker>
            <Fit className="ml-[6px] w-[158px]">DIF:0.049</Fit>
            <Arrow className="ml-[10px] h-[42px] w-[20px]" />
            <Fit className="ml-[15px] w-[160px] text-[#e5c250]">DEA:0.057</Fit>
            <span className="ml-[9px] text-[#e5c250]"><Arrow className="h-[42px] w-[19px]" /></span>
            <Fit className="ml-[15px] w-[158px] text-[#c043cf]">M:-0.016</Fit>
            <span className="ml-[11px] text-[#c043cf]"><Arrow className="h-[42px] w-[20px]" /></span>
          </div>
          <MacdChart />
          <div className="flex h-[65px] items-center justify-between pl-[15px] pr-[61px] text-[48px] text-[#999]">
            <Fit className="w-[114px]">09:30</Fit>
            <Fit className="w-[111px]">15:00</Fit>
          </div>
        </div>
        <OrderBook />
      </div>
      <CommentBar />
      <BottomNav />
    </div>
  );
}
